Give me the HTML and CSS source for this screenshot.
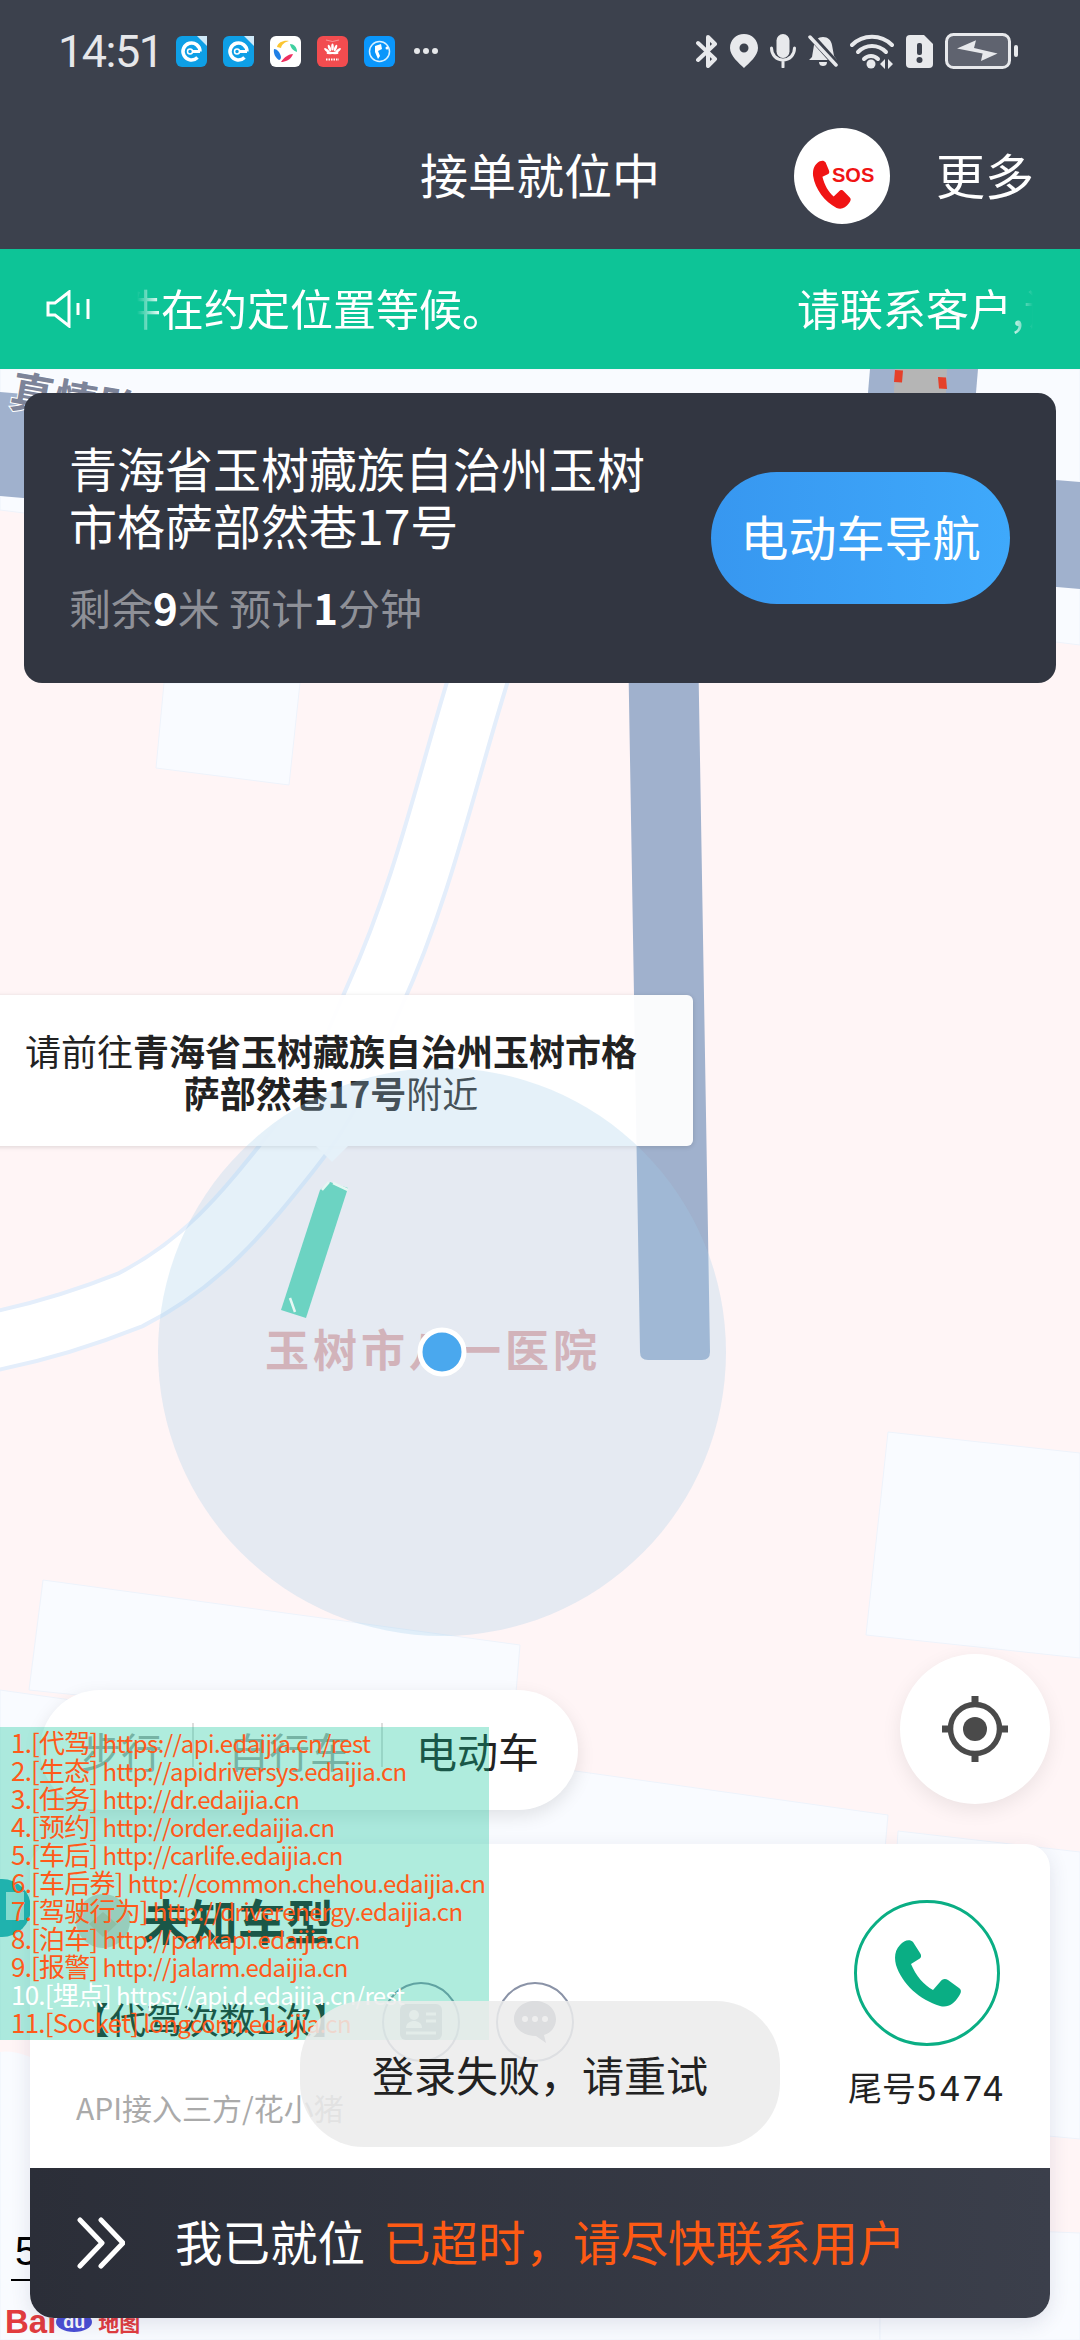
FILE: index.html
```html
<!DOCTYPE html>
<html>
<head>
  <meta charset="utf-8">
  <meta name="viewport" content="width=device-width, initial-scale=1">
  <link rel="stylesheet" href="styles.css">
  <title>接单就位中</title>
</head>
<body>
<div class="screen">

  <header class="topbar">
    <div class="statusbar">
      <div class="status-left">
        <span class="clock">14:51</span>
        <svg class="app-icon" viewBox="0 0 31 31"><rect width="31" height="31" rx="6" fill="#0e9fe6"/><path d="M24 15.500a8.500 8.500 0 1 0-2.500 6" fill="none" stroke="#fff" stroke-width="3.500"/><path d="M15 15.500h9" stroke="#fff" stroke-width="3"/><circle cx="14" cy="15.500" r="2.500" fill="#0e9fe6" stroke="#fff" stroke-width="1.500"/><path d="M21 0h10v10z" fill="#cfe9f8"/></svg>
        <svg class="app-icon" viewBox="0 0 31 31"><rect width="31" height="31" rx="6" fill="#0e9fe6"/><path d="M24 15.500a8.500 8.500 0 1 0-2.500 6" fill="none" stroke="#fff" stroke-width="3.500"/><path d="M15 15.500h9" stroke="#fff" stroke-width="3"/><circle cx="14" cy="15.500" r="2.500" fill="#0e9fe6" stroke="#fff" stroke-width="1.500"/><path d="M21 0h10v10z" fill="#cfe9f8"/></svg>
        <svg class="app-icon" viewBox="0 0 31 31"><rect width="31" height="31" rx="6" fill="#fff"/><path d="M7 11c1-5 7-7 12-6-4 1-7 3-8 7z" fill="#fbc531"/><path d="M20 8c4 0 7 3 7 8-3-1-6-3-7-8z" fill="#3fd0a0"/><path d="M4 13c3 0 6 3 7 8 0 2-1 3-2 3-3-2-6-6-5-11z" fill="#1f7fe6"/><path d="M11 26c4 0 10-2 12-8-4 0-9 3-12 8z" fill="#ee2f5f"/></svg>
        <svg class="app-icon" viewBox="0 0 31 31"><rect width="31" height="31" rx="6" fill="#f24c4f"/><path d="M9 4q6.500 3 13 0" fill="none" stroke="#fff" stroke-opacity=".4"/><g fill="#fff"><ellipse cx="15.500" cy="11" rx="1.300" ry="3.500"/><ellipse cx="12.500" cy="12" rx="1.300" ry="3.500" transform="rotate(-20 12.500 12)"/><ellipse cx="18.500" cy="12" rx="1.300" ry="3.500" transform="rotate(20 18.500 12)"/><ellipse cx="10" cy="14.500" rx="1.300" ry="3.500" transform="rotate(-50 10 14.500)"/><ellipse cx="21" cy="14.500" rx="1.300" ry="3.500" transform="rotate(50 21 14.500)"/><ellipse cx="13" cy="17" rx="3.500" ry="1.200"/><ellipse cx="18" cy="17" rx="3.500" ry="1.200"/></g><path d="M9 23.500h13" stroke="#fff" stroke-width="2" stroke-dasharray="1.500 1"/></svg>
        <svg class="app-icon" viewBox="0 0 31 31"><rect width="31" height="31" rx="6" fill="#0a96fb"/><circle cx="15.500" cy="15.500" r="10" fill="none" stroke="#d8f0ff" stroke-width="1.500"/><path d="M11 10l6-2 1 5-4 2 2 5-2 3-3-7z" fill="#fff"/><circle cx="23" cy="12" r="1.500" fill="#fff"/></svg>
        <span class="more-dots"><i></i><i></i><i></i></span>
      </div>
      <div class="status-right">
        <svg width="22" height="34" viewBox="0 0 22 34" fill="none" stroke="#e8e9ec" stroke-width="4" stroke-linejoin="round" stroke-linecap="round"><path d="M2 9l17 16-7 7V3l7 7L2 26"/></svg>
        <svg width="28" height="34" viewBox="0 0 28 34"><path fill="#e8e9ec" fill-rule="evenodd" d="M14 0C6 0 0 6 0 14c0 8 9 15 14 20 5-5 14-12 14-20C28 6 22 0 14 0zm0 9.500a4.500 4.500 0 1 1 0 9 4.500 4.500 0 0 1 0-9z"/></svg>
        <svg width="26" height="34" viewBox="0 0 26 34" fill="none" stroke="#e8e9ec"><rect x="6.500" y="0" width="13" height="24" rx="6.500" fill="#e8e9ec" stroke="none"/><path d="M1.500 14c0 7 5 12 11.500 12s11.500-5 11.500-12M13 26v7" stroke-width="3" stroke-linecap="round"/></svg>
        <svg width="30" height="32" viewBox="0 0 30 32"><path fill="#e8e9ec" d="M15 2c5 0 8 3 9 8l2 11 3 4H1l3-3 2-12c1-5 4-8 9-8z"/><path d="M11 27h8c0 3-2 4-4 4s-4-1-4-4z" fill="#e8e9ec"/><path d="M3 1l26 29" stroke="#3c414d" stroke-width="7"/><path d="M2 2l26 28" stroke="#e8e9ec" stroke-width="3.500" stroke-linecap="round"/></svg>
        <svg width="44" height="35" viewBox="0 0 44 35" fill="none" stroke="#e8e9ec" stroke-linecap="round"><path d="M2 11c11-11 29-11 40 0" stroke-width="4"/><path d="M8 18c8-8 20-8 28 0" stroke-width="4"/><path d="M14 25c4-4 10-4 14 0" stroke-width="4"/><circle cx="21" cy="30" r="4.500" fill="#e8e9ec" stroke="none"/><path d="M35 25l-5 5 5 5zM38 25l5 5-5 5z" fill="#e8e9ec" stroke="none"/></svg>
        <svg width="27" height="33" viewBox="0 0 27 33"><path fill="#e8e9ec" d="M4 0h14l9 9v20a4 4 0 0 1-4 4H4a4 4 0 0 1-4-4V4a4 4 0 0 1 4-4z"/><rect x="11" y="8" width="5" height="12" rx="2" fill="#3c414d"/><circle cx="13.500" cy="25" r="3" fill="#3c414d"/></svg>
        <svg width="73" height="36" viewBox="0 0 73 36"><rect x="1.500" y="1.500" width="63" height="33" rx="7" fill="#5f636f" stroke="#e8e9ec" stroke-width="3"/><rect x="69" y="12" width="4" height="12" rx="2" fill="#e8e9ec"/><path d="M12 15.600L31 7.300 29 15 52.600 20.600 36 28 37.600 20.600z" fill="#e8e9ec"/></svg>
      </div>
    </div>
    <nav class="navbar">
      <div></div>
      <h1 class="nav-title">接单就位中</h1>
      <div class="nav-actions">
        <div class="sos-btn">
          <svg width="96" height="96" viewBox="0 0 96 96"><path fill="#f01414" transform="translate(17 34) scale(.62 .68) rotate(8 33 33)" d="M6 5C10 0 16-1 19 2l7 11c2 3 1 5-1 6l-8 5c5 12 13 21 22 26l7-8c2-3 5-4 8-2l11 8c3 2 2 5 0 8-5 8-11 12-19 10C26 60 8 44 2 25 0 17 1 10 6 5z"/><text x="38" y="54" class="sos-text">SOS</text></svg>
        </div>
        <span class="nav-more">更多</span>
      </div>
    </nav>
  </header>

  <div class="ticker">
    <svg class="ticker-icon" width="44" height="38" viewBox="0 0 44 38" fill="none" stroke="#fff" stroke-width="3"><path d="M2 13h7L23 2v34L9 25H2z"/><path d="M32 13v12M42 9v20"/></svg>
    <div class="ticker-track">
      <div class="ticker-text"><span>件在约定位置等候。</span><span>请联系客户,请</span></div>
    </div>
  </div>

  <main class="map">
    <svg class="map-base" width="1080" height="1971" viewBox="0 369 1080 1971">
      <path class="block" d="M0 369H1080V645L0 510z"/>
      <path class="block" d="M164 683H300L289 785 156 768z"/>
      <path class="block" d="M888 1432L1080 1453V1658L866 1635z"/>
      <path class="block" d="M43 1580L520 1645 512 1740 29 1690z"/>
      <path class="block" d="M0 1690L888 1815 884 1860 880 2340H0z"/>
      <path class="block" d="M898 1831L1080 1852V2139L880 2120z"/>
      <path class="block" d="M880 2225L1080 2233V2340H880z"/>
      <path d="M0 2040H30V2057Q12 2050 0 2052z" fill="#fff5f6"/>
      <path class="water" d="M0 392L1080 482V589L0 496z"/>
      <path class="water" d="M870 369H978L972 440H864z"/>
      <path d="M895 369H947L944 440H892z" fill="#b5b5b5"/>
      <path d="M895 370l8 .5-1 12-8-.5zM938 377l8 .5 1 11.500-8-.5z" fill="#e5402a"/>
      <path class="water" d="M628 640H698L710 1352q0 8-8 8H648q-8 0-8-8z"/>
      <path class="road-edge" d="M490 640L477 683C445 787 422 891 375 995C352 1047 335 1098 293 1150C245 1210 205 1262 130 1300C90 1316 40 1332-10 1342"/>
      <path class="road-fill" d="M490 640L477 683C445 787 422 891 375 995C352 1047 335 1098 293 1150C245 1210 205 1262 130 1300C90 1316 40 1332-10 1342"/>
      <text class="road-name" transform="translate(8 406) rotate(10)">真情路</text>
      <circle cx="2" cy="1908" r="29" fill="#2aa9ba"/>
      <path d="M6 1892h18v28H6z" fill="#bfe6ea"/>
    </svg>

    <div class="hint-tip">
      请前往<b>青海省玉树藏族自治州玉树市格<br>萨部然巷17号</b>附近
    </div>

    <svg class="map-over" width="1080" height="1971" viewBox="0 369 1080 1971">
      <circle cx="442" cy="1352" r="284" fill="rgb(160,205,235)" fill-opacity=".28"/>
      <path d="M320 1190L330 1182 348 1188 306 1318 281 1310z" fill="#6cd3c2"/>
      <path d="M322 1190l7-8M333 1183l15 7M290 1298l5 14" stroke="#e6f7f3" stroke-width="2.500" fill="none"/>
      <text class="poi-name" x="265" y="1367">玉树市八一医院</text>
      <circle cx="442" cy="1352" r="22" fill="#4aa8ee" stroke="#fff" stroke-width="5"/>
    </svg>

    <div class="scale-mark">5</div>
    <div class="baidu-mark"><span class="baidu-bai">Bai</span><span class="baidu-du">du</span><span class="baidu-map">地图</span></div>

    <section class="dest-card">
      <div class="dest-info">
        <div class="dest-address">青海省玉树藏族自治州玉树<br>市格萨部然巷17号</div>
        <div class="dest-meta">剩余<b>9</b>米 预计<b>1</b>分钟</div>
      </div>
      <div class="nav-btn">电动车导航</div>
    </section>

    <div class="mode-pill">
      <span class="mode mode-walk">步行</span>
      <i class="mode-sep"></i>
      <span class="mode mode-bike">自行车</span>
      <i class="mode-sep"></i>
      <span class="mode mode-ebike">电动车</span>
    </div>

    <div class="locate-btn">
      <svg width="66" height="66" viewBox="0 0 66 66"><circle cx="33" cy="33" r="24.500" fill="none" stroke="#4a4a4a" stroke-width="5.500"/><circle cx="33" cy="33" r="12" fill="#4a4a4a"/><path d="M33 0v10M33 56v10M0 33h10M56 33h10" stroke="#4a4a4a" stroke-width="7"/></svg>
    </div>

    <section class="order-card">
      <div class="order-body">
        <div class="order-main">
          <div class="order-head">
            <svg class="car-icon" width="54" height="54" viewBox="0 0 54 54"><circle cx="27" cy="27" r="27" fill="#dbd1ce"/><path d="M27 18l14 12-14 13-14-13z" fill="#cfbcac"/></svg>
            <span class="car-type">未知车型</span>
          </div>
          <div class="order-row">
            <span class="order-count">【代驾次数1次】</span>
            <div class="round-icons">
              <div class="round-icon">
                <svg width="42" height="36" viewBox="0 0 42 36"><rect width="42" height="36" rx="6" fill="#7d8494"/><circle cx="14" cy="11" r="5" fill="#fff"/><path d="M6 24c0-5 4-7 8-7s8 2 8 7z" fill="#fff"/><path d="M26 10h10M26 17h10M6 29h30" stroke="#fff" stroke-width="3"/></svg>
              </div>
              <div class="round-icon">
                <svg width="42" height="42" viewBox="0 0 42 42"><path fill="#7d8494" d="M21 0c12 0 21 8 21 18 0 8-5 14-12 16l2 8-10-7C10 35 0 28 0 18 0 8 9 0 21 0z"/><circle cx="11" cy="18" r="3" fill="#fff"/><circle cx="21" cy="18" r="3" fill="#fff"/><circle cx="31" cy="18" r="3" fill="#fff"/></svg>
              </div>
            </div>
          </div>
          <div class="order-source">API接入三方/花小猪</div>
        </div>
        <div class="order-call">
          <div class="call-btn">
            <svg width="67" height="67" viewBox="0 0 67 67"><path fill="#0aae84" d="M6 5C10 0 16-1 19 2l7 11c2 3 1 5-1 6l-8 5c5 12 13 21 22 26l7-8c2-3 5-4 8-2l11 8c3 2 2 5 0 8-5 8-11 12-19 10C26 60 8 44 2 25 0 17 1 10 6 5z"/></svg>
          </div>
          <div class="call-label">尾号<span>5474</span></div>
        </div>
      </div>
      <div class="arrive-bar">
        <svg width="48" height="52" viewBox="0 0 48 52" fill="none" stroke="#fff" stroke-width="5" stroke-linecap="round" stroke-linejoin="round"><path d="M3 3l22 23L3 49M24 3l22 23-22 23"/></svg>
        <span class="arrive-text">我已就位</span>
        <span class="arrive-warn">已超时&#65292;请尽快联系用户</span>
      </div>
    </section>
  </main>

  <div class="debug-panel">
    <div>1.[代驾] <span class="url">https://api.edaijia.cn/rest</span></div>
    <div>2.[生态] <span class="url">http://apidriversys.edaijia.cn</span></div>
    <div>3.[任务] <span class="url">http://dr.edaijia.cn</span></div>
    <div>4.[预约] <span class="url">http://order.edaijia.cn</span></div>
    <div>5.[车后] <span class="url">http://carlife.edaijia.cn</span></div>
    <div>6.[车后券] <span class="url">http://common.chehou.edaijia.cn</span></div>
    <div>7.[驾驶行为] <span class="url">http://driverenergy.edaijia.cn</span></div>
    <div>8.[泊车] <span class="url">http://parkapi.edaijia.cn</span></div>
    <div>9.[报警] <span class="url">http://jalarm.edaijia.cn</span></div>
    <div class="debug-on">10.[埋点] <span class="url">https://api.d.edaijia.cn/rest</span></div>
    <div>11.[Socket] <span class="url">longconn.edaijia.cn</span></div>
  </div>

  <div class="toast">登录失败&#65292;请重试</div>
</div>
</body>
</html>
```

FILE: styles.css
```css
html, body {
  margin: 0;
  padding: 0;
  background: #fff;
}

body {
  font-family: "Noto Sans CJK SC", "Noto Sans", sans-serif;
  color: #222;
}

.screen {
  position: relative;
  display: flex;
  flex-direction: column;
  width: 1080px;
  height: 2340px;
  overflow: hidden;
}

/* top bar */
.topbar {
  height: 249px;
  background: #3c414d;
  color: #fff;
}

.statusbar {
  display: flex;
  justify-content: space-between;
  align-items: center;
  height: 102px;
  padding: 0 62px 0 58px;
}

.status-left, .status-right {
  display: flex;
  align-items: center;
}

.status-left { gap: 16px; }
.status-right { gap: 12px; }

.clock {
  width: 102px;
  font-family: Roboto, sans-serif;
  font-size: 45px;
  letter-spacing: -1.500px;
  color: #e6e7ea;
}

.app-icon {
  width: 31px;
  height: 31px;
}

.more-dots {
  display: flex;
  gap: 3px;
  margin-left: 3px;
}

.more-dots i {
  width: 6px;
  height: 6px;
  border-radius: 50%;
  background: #e6e7ea;
}

.navbar {
  display: grid;
  grid-template-columns: 1fr auto 1fr;
  align-items: center;
  height: 147px;
}

.nav-title {
  margin: 0 0 5px;
  font-size: 48px;
  font-weight: 400;
}

.nav-actions {
  display: flex;
  justify-content: flex-end;
  align-items: center;
  gap: 46px;
  padding-right: 46px;
}

.sos-btn {
  width: 96px;
  height: 96px;
  border-radius: 50%;
  background: #fff;
}

.sos-text {
  font-family: "Liberation Sans", sans-serif;
  font-size: 20px;
  font-weight: 700;
  fill: #f01414;
}

.nav-more {
  margin-bottom: 5px;
  font-size: 49px;
}

/* scrolling notice */
.ticker {
  display: flex;
  align-items: center;
  height: 120px;
  padding-left: 46px;
  background: #0dc497;
  color: #fff;
}

.ticker-track {
  width: 896px;
  margin-left: 47px;
  overflow: hidden;
  -webkit-mask-image: linear-gradient(90deg, transparent 0, #000 24px, #000 872px, transparent 100%);
  mask-image: linear-gradient(90deg, transparent 0, #000 24px, #000 872px, transparent 100%);
}

.ticker-text {
  display: flex;
  gap: 292px;
  margin: 0 0 5px -19px;
  font-size: 43px;
  white-space: nowrap;
}

/* map */
.map {
  position: relative;
  flex: 1;
  background: #fff5f6;
  overflow: hidden;
}

.map-base, .map-over {
  position: absolute;
  top: 0;
  left: 0;
}

.block {
  fill: #f9fbff;
  stroke: #eef3fb;
  stroke-width: 1;
}

.water { fill: #a0b1cd; }

.road-edge, .road-fill {
  fill: none;
}

.road-edge {
  stroke: #e4eefb;
  stroke-width: 62;
}

.road-fill {
  stroke: #fff;
  stroke-width: 54;
}

.road-name {
  font-size: 44px;
  font-weight: 700;
  fill: #7d8499;
  stroke: #fff;
  stroke-width: 2;
  paint-order: stroke;
}

.poi-name {
  font-size: 44px;
  font-weight: 700;
  letter-spacing: 4px;
  fill: #d2b3ba;
}

.hint-tip {
  position: absolute;
  top: 626px;
  left: -31px;
  box-sizing: border-box;
  width: 724px;
  height: 151px;
  padding-top: 34px;
  border-radius: 6px;
  background: rgba(255, 255, 255, .94);
  box-shadow: 0 1px 5px rgba(0, 0, 0, .14);
  font-size: 36px;
  line-height: 42px;
  text-align: center;
  color: #222;
}

.hint-tip::after {
  content: "";
  position: absolute;
  top: 100%;
  left: 347px;
  border: 16px solid transparent;
  border-bottom-width: 0;
  border-top-color: rgba(255, 255, 255, .94);
}

.scale-mark {
  position: absolute;
  left: 11px;
  top: 1858px;
  width: 30px;
  height: 52px;
  padding-left: 4px;
  border-bottom: 2px solid #000;
  font-family: "Liberation Sans", sans-serif;
  font-size: 40px;
  line-height: 48px;
  color: #000;
}

.baidu-mark {
  position: absolute;
  left: 5px;
  top: 1938px;
  display: flex;
  align-items: center;
  font-family: "Liberation Sans", sans-serif;
  font-weight: 700;
  color: #e23c3f;
}

.baidu-bai {
  font-size: 33px;
  line-height: 30px;
}

.baidu-du {
  width: 36px;
  border-radius: 50%;
  background: #4b4fd6;
  font-size: 18px;
  line-height: 20px;
  text-align: center;
  color: #fff;
}

.baidu-map {
  margin-left: 6px;
  font-family: "Noto Sans CJK SC", sans-serif;
  font-size: 21px;
  line-height: 30px;
}

/* destination card */
.dest-card {
  position: absolute;
  top: 24px;
  left: 24px;
  display: flex;
  justify-content: space-between;
  align-items: center;
  box-sizing: border-box;
  width: 1032px;
  height: 290px;
  padding: 0 46px 0 45px;
  border-radius: 18px;
  background: #323641;
  color: #fff;
}

.dest-info {
  margin-bottom: 5px;
}

.dest-address {
  font-size: 48px;
  line-height: 57px;
}

.dest-meta {
  margin-top: 29px;
  font-size: 42px;
  line-height: 50px;
  color: #8e9097;
}

.dest-meta b {
  color: #fff;
}

.nav-btn {
  width: 299px;
  height: 132px;
  border-radius: 66px;
  background: linear-gradient(90deg, #3797f0, #3fa9fb);
  font-size: 48px;
  line-height: 127px;
  text-align: center;
}

/* travel mode switch */
.mode-pill {
  position: absolute;
  top: 1321px;
  left: 40px;
  display: flex;
  align-items: center;
  width: 538px;
  height: 120px;
  border-radius: 60px;
  background: #fff;
  box-shadow: 0 6px 18px rgba(0, 0, 0, .1);
  font-size: 41px;
  line-height: 116px;
}

.mode-walk { padding: 0 30px 0 40px; }
.mode-bike { padding: 0 30px 0 34px; }
.mode-ebike { padding-left: 33px; }

.mode-walk, .mode-bike { color: #aaa; }

.mode-sep {
  width: 2px;
  height: 44px;
  margin-top: -10px;
  background: #ddd;
}

.locate-btn {
  position: absolute;
  top: 1285px;
  left: 900px;
  display: flex;
  justify-content: center;
  align-items: center;
  width: 150px;
  height: 150px;
  border-radius: 50%;
  background: #fff;
  box-shadow: 0 6px 20px rgba(0, 0, 0, .08);
}

/* order card */
.order-card {
  position: absolute;
  left: 30px;
  bottom: 22px;
  width: 1020px;
  border-radius: 24px;
  background: #fff;
  box-shadow: 0 6px 20px rgba(40, 50, 90, .12);
  overflow: hidden;
}

.order-body {
  display: flex;
  justify-content: space-between;
  box-sizing: border-box;
  height: 324px;
  padding: 0 43px 0 46px;
}

.order-main {
  padding-top: 47px;
}

.order-head {
  display: flex;
  align-items: center;
  gap: 12px;
  height: 60px;
}

.car-type {
  margin-bottom: 4px;
  font-size: 48px;
  font-weight: 700;
}

.order-row {
  display: flex;
  align-items: center;
  height: 80px;
  margin-top: 31px;
}

.order-count {
  margin: 0 0 8px -3px;
  font-size: 36.500px;
  color: #222;
}

.round-icons {
  display: flex;
  gap: 36px;
  margin-left: 33px;
}

.round-icon {
  display: flex;
  justify-content: center;
  align-items: center;
  box-sizing: border-box;
  width: 78px;
  height: 80px;
  border: 2px solid #8a93a7;
  border-radius: 50%;
}

.order-source {
  margin-top: 25px;
  font-size: 30px;
  line-height: 40px;
  color: #aaa;
}

.order-call {
  display: flex;
  flex-direction: column;
  align-items: center;
  width: 160px;
  padding-top: 56px;
}

.call-btn {
  display: flex;
  justify-content: center;
  align-items: center;
  box-sizing: border-box;
  width: 146px;
  height: 146px;
  border: 3px solid #0aae84;
  border-radius: 50%;
}

.call-label {
  margin-top: 19px;
  font-size: 34px;
  line-height: 44px;
  white-space: nowrap;
  color: #222;
}

.call-label span {
  font-family: Inter, sans-serif;
  letter-spacing: 2px;
}

.arrive-bar {
  display: flex;
  align-items: center;
  height: 150px;
  padding-left: 47px;
  background: linear-gradient(90deg, #2b2e38, #3b3f4b);
  font-size: 47.500px;
}

.arrive-text {
  margin: 0 0 6px 50px;
  color: #fff;
}

.arrive-warn {
  margin: 0 0 6px 18px;
  color: #fe5a14;
}

/* debug overlay */
.debug-panel {
  position: absolute;
  top: 1727px;
  left: 0;
  box-sizing: border-box;
  width: 489px;
  height: 313px;
  padding: 1px 0 0 11px;
  background: rgba(13, 196, 151, .33);
  font-size: 26px;
  letter-spacing: -.8px;
  white-space: nowrap;
  color: #ff5a1a;
}

.debug-panel div {
  height: 28px;
  line-height: 28px;
}

.url {
  font-size: 24px;
  letter-spacing: -.6px;
}

.debug-on { color: #fff; }

.toast {
  position: absolute;
  top: 2001px;
  left: 300px;
  width: 480px;
  height: 146px;
  border-radius: 64px;
  background: rgba(235, 235, 235, .86);
  font-size: 42px;
  line-height: 146px;
  text-align: center;
  color: #222;
}
```
